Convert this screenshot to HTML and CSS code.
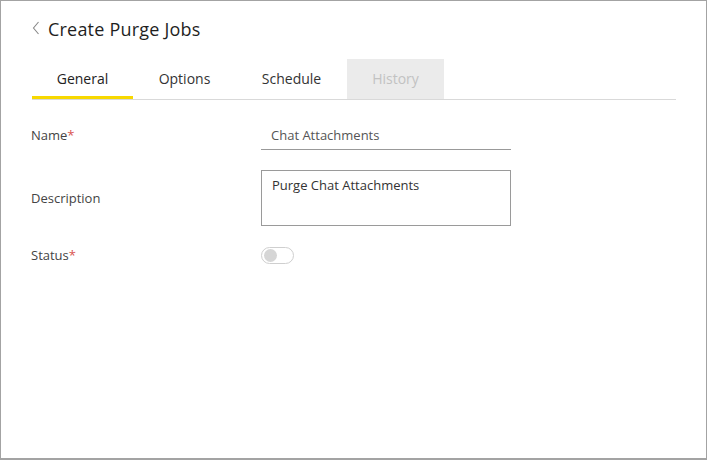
FILE: index.html
```html
<!DOCTYPE html>
<html>
<head>
<meta charset="utf-8">
<link rel="stylesheet" href="styles.css">
</head>
<body>
<div class="frame">
  <div class="header">
    <svg class="back" width="8" height="14" viewBox="0 0 8 14"><path d="M6.5 1 L1.5 7 L6.5 13" fill="none" stroke="#888" stroke-width="1.1"/></svg>
    <h1 class="title">Create Purge Jobs</h1>
  </div>
  <div class="tabs">
    <div class="tab tab-general active">General</div>
    <div class="tab tab-options">Options</div>
    <div class="tab tab-schedule">Schedule</div>
    <div class="tab tab-history disabled">History</div>
  </div>
  <div class="form">
    <div class="label">Name<span class="req">*</span></div>
    <div class="input">Chat Attachments</div>
    <div class="label">Description</div>
    <div class="textarea">Purge Chat Attachments</div>
    <div class="label">Status<span class="req">*</span></div>
    <div class="toggle"><span class="knob"></span></div>
  </div>
</div>
</body>
</html>
```
FILE: styles.css
```css
html, body {
  margin: 0;
  padding: 0;
  background: #fff;
}
body {
  font-family: "Open Sans", "Noto Sans", sans-serif;
  color: #333;
}
.frame {
  width: 707px;
  height: 460px;
  box-sizing: border-box;
  border: 1px solid #a3a3a3;
  border-bottom-width: 2px;
  padding: 0 30px;
}
.header {
  display: flex;
  align-items: center;
  gap: 8px;
  margin-top: 16px;
  height: 24px;
}
.back {
  margin-left: 1px;
  margin-top: -2px;
}
.title {
  margin: 0;
  font-size: 18px;
  line-height: 24px;
  font-weight: 400;
  letter-spacing: 0.2px;
  color: #1f1f1f;
}
.tabs {
  display: flex;
  margin-top: 18px;
  margin-left: 1px;
  width: 644px;
  border-bottom: 1px solid #d9d9d9;
}
.tab {
  box-sizing: border-box;
  height: 40px;
  padding-top: 10px;
  text-align: center;
  font-size: 14px;
  line-height: 19px;
  color: #333;
  border-bottom: 3px solid transparent;
}
.tab-general { width: 101px; }
.tab-options { width: 103px; }
.tab-schedule { width: 111px; }
.tab-history { width: 97px; }
.tab.active {
  border-bottom-color: #f7d800;
  color: #222;
}
.tab.disabled {
  background: #ebebeb;
  color: #c2c2c2;
}
.form {
  display: grid;
  grid-template-columns: 230px 250px;
  row-gap: 20px;
  align-items: center;
  margin-top: 20px;
  font-size: 13px;
  line-height: 18px;
}
.label {
  color: #444;
}
.req {
  color: #d9534f;
}
.input {
  box-sizing: border-box;
  height: 30px;
  padding: 6px 10px 0;
  border-bottom: 1px solid #999;
  color: #555;
}
.textarea {
  box-sizing: border-box;
  height: 56px;
  padding: 5px 10px;
  border: 1px solid #9a9a9a;
  color: #333;
}
.toggle {
  box-sizing: border-box;
  width: 33px;
  height: 17px;
  border: 1px solid #cfcfcf;
  border-radius: 9px;
  position: relative;
}
.knob {
  position: absolute;
  left: 2px;
  top: 1px;
  width: 13px;
  height: 13px;
  border-radius: 50%;
  background: #d6d6d6;
}
```
